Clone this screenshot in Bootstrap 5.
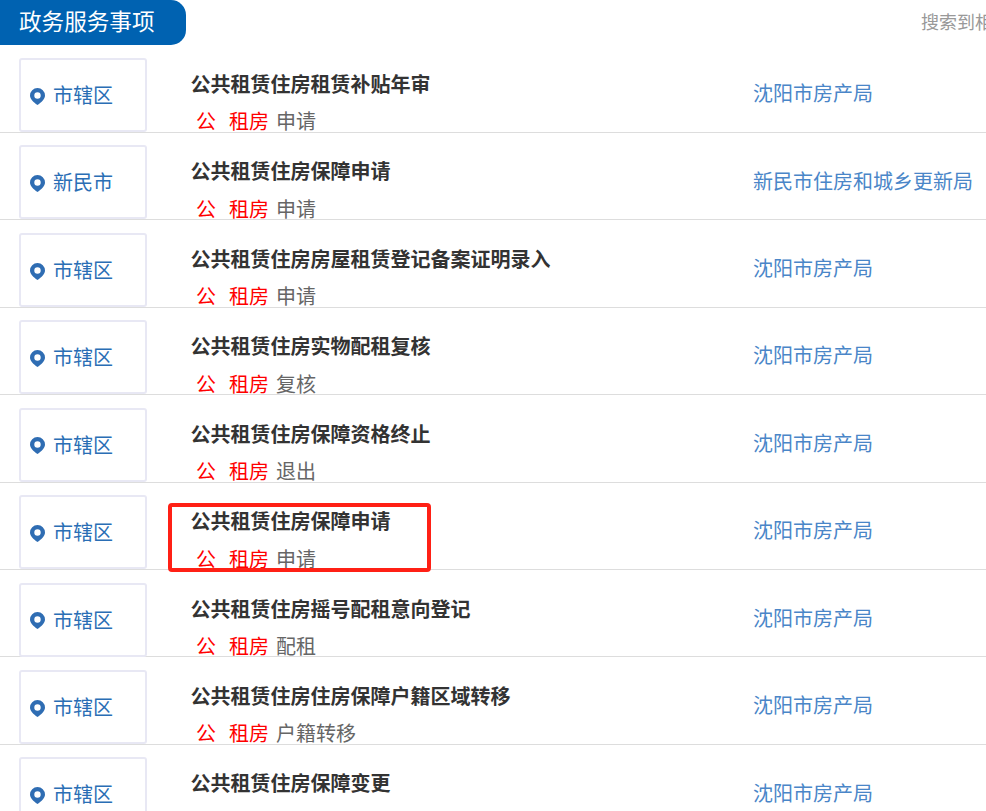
<!DOCTYPE html>
<html lang="zh-CN">
<head>
    <meta charset="UTF-8">
    <meta name="viewport" content="width=device-width, initial-scale=1.0">
    <title>政务服务事项</title>
    <link href="https://cdn.jsdelivr.net/npm/bootstrap@5.3.0/dist/css/bootstrap.min.css" rel="stylesheet">
    <style>
        html, body {
            height: 811px;
            overflow: hidden;
        }
        body {
            font-family: "Liberation Sans", "Noto Sans CJK SC", sans-serif;
            font-size: 20px;
            position: relative;
        }
        .page-head {
            height: 45.4px;
        }
        .head-tab {
            width: 186px;
            height: 45px;
            background: #0062b1;
            color: #fff;
            font-size: 22.6px;
            line-height: 45px;
            padding-left: 19px;
            border-radius: 0 15px 15px 0;
        }
        .head-hint {
            width: 65px;
            padding-top: 9px;
            font-size: 18px;
            line-height: 28px;
            color: #999;
            white-space: nowrap;
            overflow: hidden;
        }
        .item-row {
            height: 87.45px;
            border-bottom: 1px solid #ddd;
        }
        .area-box {
            width: 128px;
            height: 74px;
            margin: 12.6px 0 0 19px;
            padding: 22px 0 0 9px;
            border: 2px solid #e8e8f4;
            border-radius: 3px;
            color: #2a6eb5;
            line-height: 29px;
        }
        .area-box svg {
            width: 15px;
            height: 17px;
            margin-right: 8px;
            margin-bottom: 3px;
        }
        .item-main {
            width: 562.5px;
            margin-left: 43.5px;
        }
        .item-title {
            margin-top: 25.5px;
            font-weight: 700;
            color: #333;
            line-height: 29px;
        }
        .item-tags {
            margin-top: 8.5px;
            padding-left: 5.5px;
            line-height: 29px;
            color: #666;
        }
        .item-tags span {
            color: #f00;
            margin-right: 8px;
        }
        .item-tags span + span {
            margin-left: 5px;
            margin-right: 7px;
        }
        .item-dept {
            padding-top: 34.7px;
            line-height: 29px;
            color: #4a86c8;
            white-space: nowrap;
        }
        .mark-box {
            position: absolute;
            left: 168px;
            top: 503px;
            width: 263px;
            height: 69px;
            border: 4px solid #ff2015;
            border-radius: 4px;
        }
    </style>
</head>
<body>
    <div class="page-head d-flex justify-content-between">
        <div class="head-tab">政务服务事项</div>
        <div class="head-hint">搜索到相关事项</div>
    </div>

    <div id="itemList"></div>
    <div class="mark-box"></div>

    <script src="https://cdn.jsdelivr.net/npm/bootstrap@5.3.0/dist/js/bootstrap.bundle.min.js"></script>
    <script>
        const items = [
            ['市辖区', '公共租赁住房租赁补贴年审', '申请', '沈阳市房产局'],
            ['新民市', '公共租赁住房保障申请', '申请', '新民市住房和城乡更新局'],
            ['市辖区', '公共租赁住房房屋租赁登记备案证明录入', '申请', '沈阳市房产局'],
            ['市辖区', '公共租赁住房实物配租复核', '复核', '沈阳市房产局'],
            ['市辖区', '公共租赁住房保障资格终止', '退出', '沈阳市房产局'],
            ['市辖区', '公共租赁住房保障申请', '申请', '沈阳市房产局'],
            ['市辖区', '公共租赁住房摇号配租意向登记', '配租', '沈阳市房产局'],
            ['市辖区', '公共租赁住房住房保障户籍区域转移', '户籍转移', '沈阳市房产局'],
            ['市辖区', '公共租赁住房保障变更', '', '沈阳市房产局']
        ];

        const pin = `<svg viewBox="0 0 15 17" class="align-middle"><path fill="#2f6db3" fill-rule="evenodd" d="M7.5 0a7.5 7.5 0 0 1 7.5 7.5c0 3.6-3.4 6.6-7.5 9.5C3.400 14.100 0 11.100 0 7.500A7.500 7.500 0 0 1 7.500 0zm0 4.300a3.200 3.200 0 1 0 0 6.400 3.200 3.200 0 0 0 0-6.400z"/></svg>`;

        document.getElementById('itemList').innerHTML = items.map(item => `
            <div class="item-row d-flex">
                <div class="area-box flex-shrink-0">${pin}${item[0]}</div>
                <div class="item-main flex-shrink-0">
                    <div class="item-title">${item[1]}</div>
                    ${item[2] ? `<div class="item-tags"><span>公</span><span>租房</span>${item[2]}</div>` : ''}
                </div>
                <div class="item-dept">${item[3]}</div>
            </div>
        `).join('');
    </script>
</body>
</html>
